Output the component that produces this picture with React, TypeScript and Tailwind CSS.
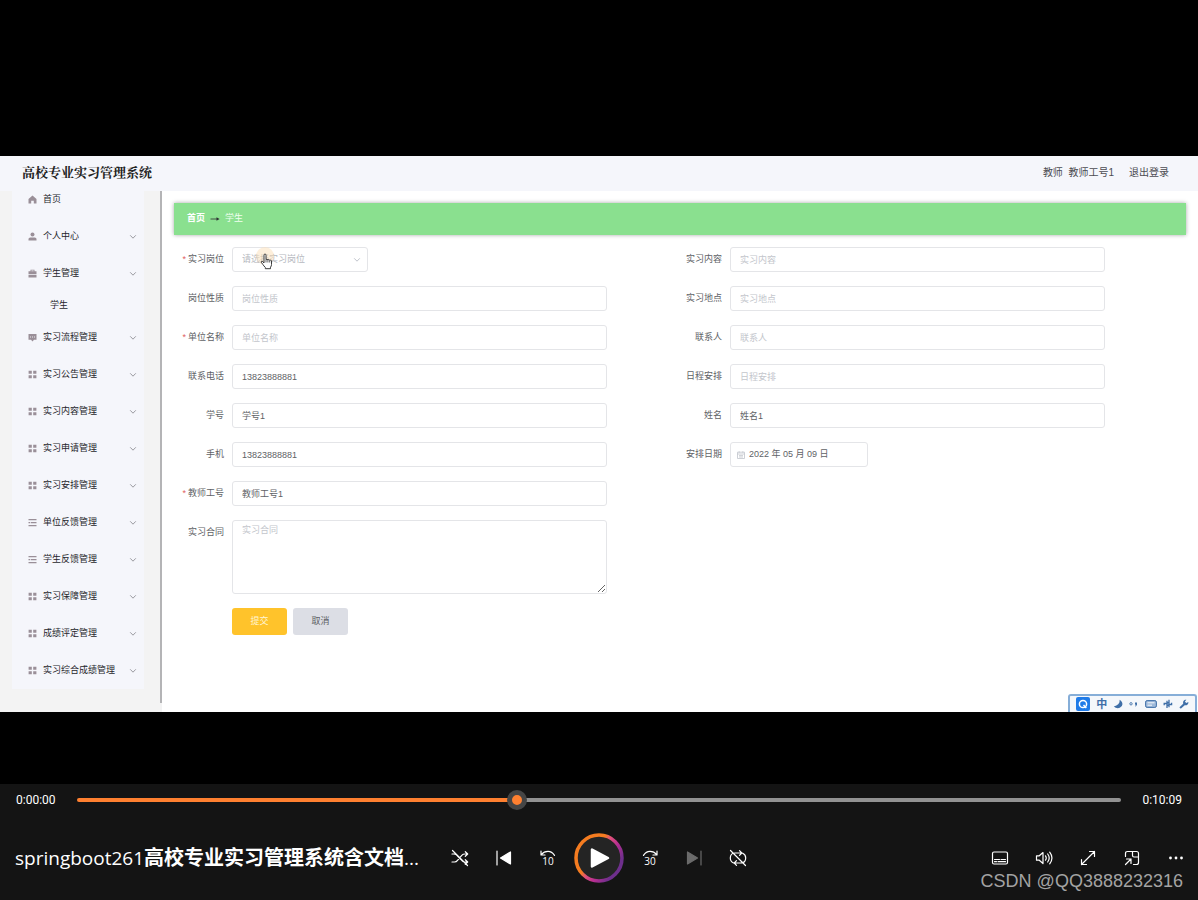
import type { ReactNode } from 'react';

type IconKind = 'home' | 'user' | 'case' | 'chat' | 'grid' | 'list';

const menu: { label: string; icon: IconKind; child?: string }[] = [
  { label: '个人中心', icon: 'user' },
  { label: '学生管理', icon: 'case', child: '学生' },
  { label: '实习流程管理', icon: 'chat' },
  { label: '实习公告管理', icon: 'grid' },
  { label: '实习内容管理', icon: 'grid' },
  { label: '实习申请管理', icon: 'grid' },
  { label: '实习安排管理', icon: 'grid' },
  { label: '单位反馈管理', icon: 'list' },
  { label: '学生反馈管理', icon: 'list' },
  { label: '实习保障管理', icon: 'grid' },
  { label: '成绩评定管理', icon: 'grid' },
  { label: '实习综合成绩管理', icon: 'grid' },
];

function MenuIcon({ kind }: { kind: IconKind }) {
  return (
    <svg viewBox="0 0 9 9" className="size-[9px] shrink-0 fill-[#9a8f98]" aria-hidden="true">
      {kind === 'home' && <path d="M4.500.5.5 4v4.500h2.700V5.700h2.600v2.800h2.700V4z" />}
      {kind === 'user' && (
        <>
          <circle cx="4.5" cy="2.6" r="2" />
          <path d="M.5 8.500V7q0-1.600 1.800-1.600h4.400q1.800 0 1.800 1.600v1.500z" />
        </>
      )}
      {kind === 'case' && (
        <path fillRule="evenodd" d="M2.500 2.200V.8h4v1.400h2v2.900h-8V2.200zm.9 0h2.200v-.6H3.400zM.5 5.700h8v2.800h-8z" />
      )}
      {kind === 'chat' && (
        <path fillRule="evenodd" d="M.5 1h8v5.800H6L4.500 8.400 3 6.800H.5zm1.600 2.600v.9h.9v-.9zm2 0v.9h.9v-.9zm2 0v.9H7v-.9z" />
      )}
      {kind === 'grid' && <path d="M.6.8h3.200v3H.6zM5.200.8h3.200v3H5.200zM.6 5.200h3.200v3H.6zM5.200 5.200h3.200v3H5.200z" />}
      {kind === 'list' && <path d="M.5 1h8v1.200h-8zM.5 4h1.800v1.200H.5zM3 4h5.500v1.200H3zM.5 7h8v1.200h-8z" />}
    </svg>
  );
}

function Chevron({ className }: { className: string }) {
  return (
    <svg viewBox="0 0 8 8" className={className} fill="none" stroke="currentColor" strokeWidth="1" aria-hidden="true">
      <path d="m1.200 2.300 2.800 2.900 2.800-2.900" />
    </svg>
  );
}

function Sidebar() {
  return (
    <aside className="w-[162px] shrink-0 bg-[#f3f3f3] pb-[9px]">
      <div className="h-full border-r-2 border-[#b4b4b6] pr-4 pl-3">
        <nav className="bg-[#f5f6fb] text-[9px] text-[#26262c]">
          <a href="#home" className="flex h-[27px] items-start gap-[6px] pl-4 leading-4">
            <span className="flex h-4 items-center">
              <MenuIcon kind="home" />
            </span>
            首页
          </a>
          {menu.map((m) => (
            <div key={m.label}>
              <button type="button" className="flex h-[37px] w-full items-center gap-[6px] pr-[7px] pl-4">
                <MenuIcon kind={m.icon} />
                <span>{m.label}</span>
                <Chevron className="ml-auto size-2 text-[#9a9aa0]" />
              </button>
              {m.child && (
                <a href="#student" className="flex h-[27px] items-center pl-[38px]">
                  {m.child}
                </a>
              )}
            </div>
          ))}
        </nav>
      </div>
    </aside>
  );
}

const boxClass =
  'block h-[25px] w-full rounded-[3px] border border-[#e4e5e8] bg-white px-[9px] text-[9px] text-[#606266] outline-none placeholder:text-[#c3c6cc]';

function Field({ id, label, required, children }: { id: string; label: string; required?: boolean; children: ReactNode }) {
  return (
    <div className="flex items-start pr-[65px]">
      <label htmlFor={id} className="flex h-[25px] w-[58px] shrink-0 items-center justify-end gap-[2px] pr-2 text-[9px] text-[#606266]">
        {required && <span className="text-[#e06060]">*</span>}
        {label}
      </label>
      <div className="min-w-0 flex-1">{children}</div>
    </div>
  );
}

function TextField({ id, label, required, value }: { id: string; label: string; required?: boolean; value?: string }) {
  return (
    <Field id={id} label={label} required={required}>
      <input id={id} type="text" defaultValue={value} placeholder={label} className={boxClass} />
    </Field>
  );
}

function InternshipForm() {
  return (
    <form className="mt-3 grid grid-cols-2 gap-y-[14px] pr-4">
      <Field id="post" label="实习岗位" required>
        <div className="relative w-[136px]">
          <select
            id="post"
            defaultValue=""
            className="block h-[25px] w-full appearance-none rounded-[3px] border border-[#e4e5e8] bg-white px-[9px] text-[9px] text-[#b6b9c0] outline-none"
          >
            <option value="">请选择实习岗位</option>
          </select>
          <Chevron className="pointer-events-none absolute top-[9px] right-[7px] size-2 text-[#c0c4cc]" />
          <Pointer />
        </div>
      </Field>
      <TextField id="content" label="实习内容" />
      <TextField id="nature" label="岗位性质" />
      <TextField id="place" label="实习地点" />
      <TextField id="company" label="单位名称" required />
      <TextField id="contact" label="联系人" />
      <TextField id="tel" label="联系电话" value="13823888881" />
      <TextField id="schedule" label="日程安排" />
      <TextField id="sno" label="学号" value="学号1" />
      <TextField id="name" label="姓名" value="姓名1" />
      <TextField id="mobile" label="手机" value="13823888881" />
      <Field id="date" label="安排日期">
        <div className="flex h-[25px] w-[138px] items-center gap-1 rounded-[3px] border border-[#e4e5e8] px-[6px]">
          <svg viewBox="0 0 8 8" className="size-2 shrink-0" fill="none" stroke="#c0c4cc" strokeWidth=".8" aria-hidden="true">
            <path d="M.5 1.200h7v6.300h-7zM.5 3h7M2.200.3v1.400M5.800.3v1.400M2 4.600h4M2 6h4" />
          </svg>
          <input id="date" type="text" defaultValue="2022 年 05 月 09 日" className="w-full min-w-0 text-[9px] text-[#606266] outline-none" />
        </div>
      </Field>
      <div className="col-start-1">
        <TextField id="tno" label="教师工号" required value="教师工号1" />
      </div>
      <div className="col-start-1">
        <Field id="contract" label="实习合同">
          <textarea
            id="contract"
            placeholder="实习合同"
            className="block h-[74px] w-full rounded-[3px] border border-[#e4e5e8] px-[9px] py-[2px] text-[9px] leading-[14px] text-[#606266] outline-none placeholder:text-[#c3c6cc]"
          />
        </Field>
      </div>
      <div className="col-start-1 flex gap-[6px] pl-[58px] text-[9px]">
        <button type="submit" className="h-[27px] w-[55px] rounded-[3px] bg-[#ffc32b] text-[#fff6d8]">
          提交
        </button>
        <button type="button" className="h-[27px] w-[55px] rounded-[3px] bg-[#dcdee5] text-[#5c5e64]">
          取消
        </button>
      </div>
    </form>
  );
}

function Pointer() {
  return (
    <span className="pointer-events-none absolute top-0 left-6 block">
      <span className="block size-[18px] rounded-full bg-[#fbdcb0]/45" />
      <svg viewBox="0 0 13 17" className="absolute top-[6px] left-1 h-[17px] w-[13px]" aria-hidden="true">
        <path
          d="M4 10V2.200Q4 1 5 1t1 1.200V6.500Q7 5.600 7.900 6.800q1-.8 1.800.4 1.300-.6 1.800.7v3.600q0 1.500-1 2.700v1.500H5.300v-1.300Q3.800 13 2.800 11.400L1.200 9.200q-.2-1.200 1-1z"
          fill="#fff"
          stroke="#3a3a3a"
          strokeWidth="1"
        />
        <path d="M6 6.500v3M7.900 7v2.500M9.700 7.500v2" stroke="#3a3a3a" strokeWidth=".8" />
      </svg>
    </span>
  );
}

function ImeBar() {
  return (
    <div className="absolute right-[1px] bottom-0 flex h-[18px] w-[129px] items-center justify-between rounded-t-[3px] border-2 border-b-0 border-[#86aed8] bg-[#f4f7fb] pr-[6px] pl-[6px] text-[#3f6fa8]">
      <svg viewBox="0 0 14 14" className="size-[14px]" aria-hidden="true">
        <rect width="14" height="14" rx="2" fill="#1f7be8" />
        <circle cx="7" cy="7" r="3.600" fill="none" stroke="#fff" strokeWidth="1.500" />
        <path d="m7.500 8 2.800 3" stroke="#fff" strokeWidth="1.500" />
      </svg>
      <span className="text-[11px] leading-3 font-bold">中</span>
      <svg viewBox="0 0 10 10" className="size-[10px] fill-current" aria-hidden="true">
        <path d="M6.500.8Q7.500 5.600.8 7.500q2.700 2.400 6 1.300Q10.500 7 9 3.200 8.200 1.500 6.500.8" />
      </svg>
      <svg viewBox="0 0 9 9" className="size-[9px]" aria-hidden="true">
        <circle cx="2" cy="3.800" r="1.200" fill="none" stroke="currentColor" strokeWidth=".9" />
        <path d="M6 2.500h2v2.200L6.500 7V4.600H6z" fill="currentColor" />
      </svg>
      <svg viewBox="0 0 12 8" className="h-2 w-3" aria-hidden="true">
        <rect x=".6" y=".6" width="10.800" height="6.800" rx="1.500" fill="#9db9da" stroke="currentColor" />
        <path d="M2.500 2.800h7M2.500 5.200h4.500" stroke="#fff" strokeWidth=".9" />
      </svg>
      <svg viewBox="0 0 10 10" className="size-[10px]" fill="none" stroke="currentColor" strokeWidth="1.300" aria-hidden="true">
        <path d="M1.200 6.300V4.500H3.800M6 5.500h2.600V3.700M4 9V1.800M6 .8v7.400M4 4.500 6 3M4 7 6 5.500" />
      </svg>
      <svg viewBox="0 0 10 10" className="size-[10px] fill-current" aria-hidden="true">
        <path d="M.5 8.300 4.200 4.800Q3.500 2 6 .8l1.400-.1L5.900 2.600l1.300 1.500 2.200-1.200Q9.500 6.500 5.700 6.300L2 9.600Q.8 9.600.5 8.300" />
      </svg>
    </div>
  );
}

function IconButton({ label, children, dim }: { label: string; children: ReactNode; dim?: boolean }) {
  return (
    <button
      type="button"
      aria-label={label}
      className={dim ? 'flex h-11 w-11 items-center justify-center text-[#6b6b6b]' : 'flex h-11 w-11 items-center justify-center text-white'}
    >
      <svg viewBox="0 -3 18 24" className="h-6 w-[18px]" fill="none" stroke="currentColor" strokeWidth="1.200" strokeLinecap="round" strokeLinejoin="round">
        {children}
      </svg>
    </button>
  );
}

function SkipNumber({ children }: { children: string }) {
  return (
    <text x="9" y="16" textAnchor="middle" fontSize="10" fontWeight="500" fill="currentColor" stroke="none" fontFamily="Open Sans, sans-serif">
      {children}
    </text>
  );
}

function Player() {
  return (
    <footer className="relative h-[116px] bg-[#141414] font-['Open_Sans','Noto_Sans_CJK_SC',sans-serif] text-white">
      <div className="flex h-8 items-center px-4 text-xs">
        <span className="w-[61px] font-['Roboto',sans-serif]">0:00:00</span>
        <input
          type="range"
          aria-label="播放进度"
          defaultValue={42}
          className="h-1 min-w-0 flex-1 appearance-none rounded-full bg-linear-to-r from-[#ff8030] from-42% to-[#929292] to-42% [&::-webkit-slider-thumb]:size-5 [&::-webkit-slider-thumb]:appearance-none [&::-webkit-slider-thumb]:rounded-full [&::-webkit-slider-thumb]:border-[5px] [&::-webkit-slider-thumb]:border-solid [&::-webkit-slider-thumb]:border-[#454545] [&::-webkit-slider-thumb]:bg-[#ff8030]"
        />
        <span className="w-[61px] text-right font-['Roboto',sans-serif]">0:10:09</span>
      </div>
      <div className="grid h-[84px] grid-cols-[1fr_auto_1fr] items-center">
        <h2 className="truncate pl-[15px] text-[19px] leading-8 font-medium">
          springboot261<span className="text-[20px] font-bold">高校专业实习管理系统含文档</span>...
        </h2>
        <div className="flex items-center">
          <IconButton label="随机播放">
            <path d="M1 13h2.500q1.800 0 3-1.700L11 6.200Q12 5 14 5h2.500M1 5h2q2 0 3.500 2l4.500 4.700Q12 13 14 13h2.500M14.300 2.700 16.700 5l-2.400 2.300M14.300 10.700l2.400 2.300-2.400 2.300M1.500 1.500l15 15" />
          </IconButton>
          <IconButton label="上一个">
            <path d="M2 2v14" />
            <path d="M15.500 3v12L5.500 9z" fill="currentColor" />
          </IconButton>
          <IconButton label="后退 10 秒">
            <path d="M2 2v4h4M2.200 5.600Q5 2.400 9 2.400t6.500 4" />
            <SkipNumber>10</SkipNumber>
          </IconButton>
          <button type="button" aria-label="播放" className="mx-1 size-[50px]">
            <svg viewBox="0 0 50 50" className="size-[50px]">
              <defs>
                <linearGradient id="ring" x1="0.15" y1="0.3" x2="0.85" y2="0.75">
                  <stop offset="0.3" stopColor="#f57c20" />
                  <stop offset="0.45" stopColor="#e0507a" />
                  <stop offset="0.7" stopColor="#b52d92" />
                  <stop offset="1" stopColor="#6e2f8c" />
                </linearGradient>
              </defs>
              <circle cx="25" cy="25" r="23" fill="#242424" stroke="url(#ring)" strokeWidth="3.500" />
              <path d="M18 16.500v17L34 25z" fill="#fff" stroke="#fff" strokeWidth="2.500" strokeLinejoin="round" />
            </svg>
          </button>
          <IconButton label="前进 30 秒">
            <path d="M16 2v4h-4M15.800 5.600Q13 2.400 9 2.400t-6.500 4" />
            <SkipNumber>30</SkipNumber>
          </IconButton>
          <IconButton label="下一个" dim>
            <path d="M16 2v14" />
            <path d="M2.500 3v12l10-6z" fill="currentColor" />
          </IconButton>
          <IconButton label="循环播放">
            <path d="M4.500 14Q1.300 12.500 1.300 9q0-5 5-5h6M10.500 1.700 12.800 4l-2.300 2.300M13.800 4.200Q16.700 5.500 16.700 9q0 5-5 5h-6M7.500 11.700 5.200 14l2.300 2.300M1.500 1.500l15 15" />
          </IconButton>
        </div>
        <div className="flex justify-end">
          <IconButton label="字幕">
            <rect x="1.500" y="3" width="15" height="12" rx="1.500" />
            <path d="M3.500 10.500h5M10 10.500h4.500M3.500 12.700h2M7 12.700h7.500" />
          </IconButton>
          <IconButton label="音量">
            <path d="M1.500 6.800v4.400h2.800L8 14.500v-11L4.300 6.800zM10.500 6.800q1.500 2.200 0 4.400M12.700 5q3 4 0 8M14.700 3.200q4.500 5.800 0 11.600" />
          </IconButton>
          <IconButton label="全屏">
            <path d="M2.500 15.500l13-13M10.500 2.500h5v5M2.500 10.500v5h5" />
          </IconButton>
          <IconButton label="迷你播放器">
            <path d="M2.500 7.500v-3q0-2 2-2h9q2 0 2 2v9q0 2-2 2h-3M9.500 2.500v4q0 1.500 1.500 1.500h4.500M2.500 15.500l5.500-5.500M3.500 10H8v4.500" />
          </IconButton>
          <IconButton label="更多">
            <g fill="currentColor" stroke="none">
              <circle cx="3.500" cy="9" r="1.400" />
              <circle cx="9" cy="9" r="1.400" />
              <circle cx="14.500" cy="9" r="1.400" />
            </g>
          </IconButton>
        </div>
      </div>
      <p className="pointer-events-none absolute right-[15px] bottom-2 font-['Liberation_Sans',sans-serif] text-[18px] leading-[22px] text-[#a3a3a3]">
        CSDN @QQ3888232316
      </p>
    </footer>
  );
}

export default function App() {
  return (
    <div className="flex min-h-screen flex-col bg-black font-['Liberation_Sans','Noto_Sans_CJK_SC',sans-serif]">
      <main className="relative mt-[156px] mb-[72px] flex flex-1 flex-col bg-white">
        <header className="flex h-[35px] shrink-0 items-center justify-between bg-[#f5f6fb] pr-[29px] pb-[3px] pl-[22px]">
          <h1 className="font-['Noto_Serif_CJK_SC','Noto_Sans_CJK_SC',serif] text-[13px] font-bold text-[#222]">高校专业实习管理系统</h1>
          <div className="flex items-center gap-[15px] text-[10px] text-[#4c4c52]">
            <span>教师&nbsp; 教师工号1</span>
            <a href="#logout">退出登录</a>
          </div>
        </header>
        <div className="flex flex-1">
          <Sidebar />
          <section className="min-w-0 flex-1 p-3">
            <div className="flex h-8 items-center gap-[5px] bg-[#8ae08f] px-[13px] text-[9px] shadow-[0_0_4px_rgba(0,0,0,0.35)]">
              <a href="#home" className="font-bold text-white">
                首页
              </a>
              <svg viewBox="0 0 10 6" className="h-[6px] w-[10px]" aria-hidden="true">
                <path d="M.5 3h7" stroke="#303133" strokeWidth=".8" />
                <path d="M6.500 1.200 9.600 3 6.500 4.800z" fill="#303133" />
              </svg>
              <span className="text-[#f0fff0]">学生</span>
            </div>
            <InternshipForm />
          </section>
        </div>
        <ImeBar />
      </main>
      <Player />
    </div>
  );
}
